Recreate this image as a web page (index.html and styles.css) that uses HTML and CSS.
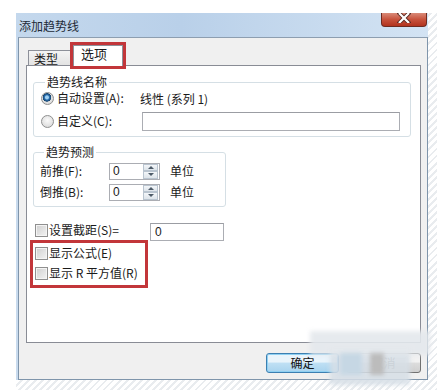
FILE: index.html
```html
<!DOCTYPE html>
<html lang="zh-CN">
<head>
<meta charset="utf-8">
<title>添加趋势线</title>
<link rel="stylesheet" href="styles.css">
</head>
<body>
<div class="page">
  <div class="window">
    <div class="titlebar">
      <span class="title">添加趋势线</span>
      <div class="close">
        <svg width="14" height="10" viewBox="0 0 14 10"><path d="M2 0 L12 10 M12 0 L2 10" stroke="#5a2a22" stroke-width="4" stroke-linecap="square"/><path d="M2 0 L12 10 M12 0 L2 10" stroke="#fff" stroke-width="2.2"/></svg>
      </div>
    </div>
    <div class="body">
      <div class="tabs">
        <div class="tab">类型</div>
        <div class="tab active">选项</div>
      </div>
      <div class="panel">
        <fieldset class="group g1">
          <legend>趋势线名称</legend>
          <div class="row r1"><span class="radio on"></span><span class="lbl w83">自动设置(A):</span><span class="txt">线性 (系列 1)</span></div>
          <div class="row r2"><span class="radio"></span><span class="lbl w85">自定义(C):</span><span class="textbox wide"></span></div>
        </fieldset>
        <fieldset class="group g2">
          <legend>趋势预测</legend>
          <div class="row sr"><span class="lbl w69">前推(F):</span><span class="spin"><span class="val">0</span><span class="arrows"><i class="up"></i><i class="down"></i></span></span><span class="unit">单位</span></div>
          <div class="row sr"><span class="lbl w69">倒推(B):</span><span class="spin"><span class="val">0</span><span class="arrows"><i class="up"></i><i class="down"></i></span></span><span class="unit">单位</span></div>
        </fieldset>
        <div class="row crow"><span class="check"></span><span class="lbl w101">设置截距(S)=</span><span class="textbox small">0</span></div>
        <div class="mark">
          <div class="row mrow"><span class="check"></span><span class="lbl">显示公式(E)</span></div>
          <div class="row mrow"><span class="check"></span><span class="lbl">显示 R 平方值(R)</span></div>
        </div>
      </div>
      <div class="buttons">
        <button class="btn default">确定</button>
        <button class="btn cancel">取消</button>
      </div>
    </div>
  </div>
  <div class="smudge"></div>
</div>
</body>
</html>
```
FILE: styles.css
```css
* { box-sizing: border-box; }
html, body { margin: 0; padding: 0; }
body {
  width: 437px;
  height: 390px;
  overflow: hidden;
  font-family: "Noto Sans CJK SC", "Noto Sans", sans-serif;
  font-size: 12px;
  color: #1a1a1a;
  background: repeating-linear-gradient(135deg, #ffffff 0 3px, #e9ecef 3px 5px);
}
.page {
  position: relative;
  height: 390px;
  padding: 13px 0 0 16px;
  background:
    linear-gradient(#fff, #fff) top left / 100% 13px no-repeat,
    linear-gradient(#fff, #fff) top left / 16px 100% no-repeat;
}
.window {
  width: 412px;
  height: 367px;
  display: flex;
  flex-direction: column;
  background: linear-gradient(90deg, #c9dbee, #d7e5f3);
}
.titlebar {
  height: 24px;
  display: flex;
  align-items: center;
  justify-content: space-between;
  padding-left: 3px;
  background: linear-gradient(90deg, #c4d8ed 0%, #b9d0e9 40%, #d3e3f3 100%);
}
.title { font-size: 12px; line-height: 16px; color: #1e2a36; margin-top: 2px; }
.close {
  align-self: flex-start;
  width: 46px;
  height: 14px;
  margin-right: 1px;
  display: flex;
  justify-content: center;
  align-items: flex-start;
  border: 1px solid #6e2b20;
  border-top: none;
  border-radius: 0 0 4px 4px;
  background: linear-gradient(#d98a78, #c7523c 50%, #b2331e);
}
.close svg { display: block; }
.body {
  flex: 1;
  margin-left: 2px;
  border: 1px solid #7f95ab;
  border-top-color: #8d9eb0;
  background: #f0f0f0;
  display: flex;
  flex-direction: column;
}
.tabs {
  height: 27px;
  display: flex;
  align-items: flex-end;
  padding-left: 9px;
}
.tab {
  width: 43px;
  height: 15px;
  line-height: 15px;
  padding-left: 5px;
  border: 1px solid #8d9099;
  border-bottom: none;
  background: linear-gradient(#f4f4f4, #e3e3e3);
  font-size: 12px;
}
.tab.active {
  position: relative;
  z-index: 2;
  width: 50px;
  height: 21px;
  line-height: 16px;
  margin-left: 2px;
  margin-bottom: -1px;
  padding-left: 7px;
  background: #fff;
  outline: 3px solid #c2363a;
  outline-offset: 0px;
  font-size: 13px;
}
.panel {
  margin: 0 6px 0 7px;
  height: 278px;
  border: 1px solid #898c95;
  background: #fff;
  display: flex;
  flex-direction: column;
  align-items: flex-start;
}
.group {
  margin: 0 0 0 6px;
  border: 1px solid #d5dfe5;
  border-radius: 3px;
  min-width: 0;
}
.group legend {
  padding: 0 2px;
  margin-left: 4px;
  line-height: 16px;
  font-size: 12px;
}
.g1 { width: 378px; margin-top: 8px; padding: 0 0 5px 7px; }
.g2 { width: 193px; margin-top: 7px; padding: 0 0 4px 6px; }
.row { display: flex; align-items: center; }
.lbl { white-space: nowrap; line-height: 16px; }
.w83 { width: 83px; }
.w85 { width: 85px; }
.w69 { width: 69px; }
.w101 { width: 101px; }
.r1 { height: 16px; }
.r2 { height: 20px; margin-top: 5px; }
.radio {
  width: 13px;
  height: 13px;
  margin-right: 3px;
  border-radius: 50%;
  border: 1px solid #8e8f8f;
  background: radial-gradient(circle at 50% 40%, #fafafa, #d4d4d4);
  flex: none;
}
.radio.on {
  background:
    radial-gradient(circle at 45% 40%, #9fd0f2 0 1.5px, #2a6fb0 2.5px, #16446e 4px, transparent 4.5px),
    radial-gradient(circle, #f4f4f4, #d0d0d0);
}
.textbox {
  height: 19px;
  border: 1px solid #abadb3;
  border-top-color: #9b9da3;
  background: #fff;
  padding-left: 4px;
  line-height: 16px;
  font-family: "Liberation Sans", sans-serif;
}
.wide { width: 258px; }
.small { width: 74px; height: 18px; margin-top: 4px; }
.sr { height: 20px; margin-top: 1px; }
.sr + .sr { margin-top: 1px; }
.spin {
  width: 51px;
  height: 17px;
  border: 1px solid #abadb3;
  display: flex;
  justify-content: space-between;
  background: #fff;
}
.val { padding-left: 3px; line-height: 15px; font-family: "Liberation Sans", sans-serif; }
.arrows {
  width: 15px;
  margin: 0 1px 0 0;
  display: flex;
  flex-direction: column;
}
.arrows i {
  flex: 1;
  display: flex;
  align-items: center;
  justify-content: center;
  border: 1px solid #b9c4cf;
  background: linear-gradient(#f3f6f9, #dde4ea);
}
.arrows i::after {
  content: "";
  border-left: 3px solid transparent;
  border-right: 3px solid transparent;
}
.arrows .up::after { border-bottom: 3px solid #4d5b68; }
.arrows .down::after { border-top: 3px solid #4d5b68; }
.unit { margin-left: 10px; line-height: 16px; }
.check {
  width: 13px;
  height: 13px;
  margin-right: 1px;
  flex: none;
  border: 1px solid #8f8f8f;
  background: linear-gradient(135deg, #cfcfcf, #f3f3f3);
  box-shadow: inset 0 0 0 1px #f4f4f4;
}
.crow { height: 20px; margin: 13px 0 0 8px; }
.mark {
  margin-left: 3px;
  width: 118px;
  border: 3px solid #c2363a;
  padding: 0 0 2px 2px;
}
.mrow { height: 20px; }
.buttons {
  display: flex;
  justify-content: flex-end;
  gap: 7px;
  margin-top: 10px;
  padding-right: 6px;
}
.btn {
  height: 20px;
  padding: 0;
  font-family: "Noto Sans CJK SC", sans-serif;
  font-size: 12px;
  line-height: 16px;
  color: #111;
  border-radius: 3px;
  border: 1px solid #707070;
  background: linear-gradient(#f2f2f2 0 45%, #dddddd 50%, #cfcfcf);
}
.btn.default {
  width: 73px;
  border-color: #3c7fb1;
  background: linear-gradient(#e9f4fb 0 45%, #bfe0f4 50%, #a9d3ee);
  box-shadow: inset 0 0 0 1px #8fd0f2;
}
.btn.cancel { width: 75px; color: #8a8a8a; }
.smudge {
  position: absolute;
  left: 310px;
  top: 323px;
  width: 120px;
  height: 62px;
  filter: blur(2px);
  background:
    linear-gradient(#c6d7e4, #c6d7e4) 30px 30px / 22px 22px no-repeat,
    linear-gradient(#bcbcbc, #bcbcbc) 60px 30px / 14px 22px no-repeat,
    linear-gradient(rgba(228,232,236,0.9), rgba(228,232,236,0.9)) 0 8px / 120px 24px no-repeat,
    linear-gradient(rgba(214,222,230,0.85), rgba(214,222,230,0.85)) 20px 26px / 80px 36px no-repeat;
}
```
